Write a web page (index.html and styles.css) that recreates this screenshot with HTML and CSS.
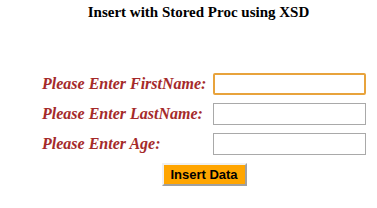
FILE: index.html
```html
<!DOCTYPE html>
<html lang="en">
<head>
    <meta charset="UTF-8">
    <title>Insert with Stored Proc using XSD</title>
    <link rel="stylesheet" href="styles.css">
</head>
<body>
    <h3 class="title">Insert with Stored Proc using XSD</h3>
    <form class="insert-form">
        <label for="firstName">Please Enter FirstName:</label>
        <input type="text" id="firstName" class="focused">
        <label for="lastName">Please Enter LastName:</label>
        <input type="text" id="lastName">
        <label for="age">Please Enter Age:</label>
        <input type="text" id="age">
        <div class="actions">
            <button type="button" class="insert-button">Insert Data</button>
        </div>
    </form>
</body>
</html>
```

FILE: styles.css
```css
body {
    margin: 0;
    padding: 0;
    background-color: #ffffff;
    font-family: "Liberation Serif", "Times New Roman", serif;
}

.title {
    margin: 0;
    padding-top: 4px;
    padding-left: 20px;
    text-align: center;
    font-size: 15px;
    font-weight: bold;
    color: #000000;
}

.insert-form {
    display: grid;
    grid-template-columns: 171px 153px;
    row-gap: 8px;
    align-items: center;
    margin-top: 52px;
    margin-left: 42px;
}

label {
    font-size: 16px;
    font-weight: bold;
    font-style: italic;
    color: #a52a2a;
}

input[type="text"] {
    box-sizing: border-box;
    width: 153px;
    height: 22px;
    margin: 0;
    border: 1px solid #a9a9a9;
    background-color: #ffffff;
}

input.focused {
    border: 2px solid #e8a33c;
    border-radius: 2px;
}

.actions {
    grid-column: 1 / 3;
    display: flex;
    justify-content: center;
}

.insert-button {
    box-sizing: border-box;
    width: 85px;
    height: 23px;
    padding: 0;
    background-color: #ffa500;
    color: #000000;
    border: 2px solid;
    border-color: #f0f0f0 #a0a0a0 #a0a0a0 #f0f0f0;
    font-family: "Liberation Sans", Arial, sans-serif;
    font-size: 13px;
    font-weight: bold;
}
```
